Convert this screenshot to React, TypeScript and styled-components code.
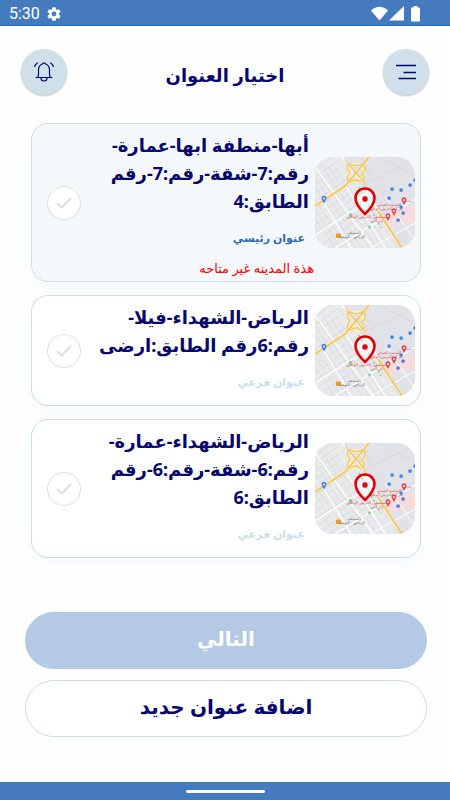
import React from "react";
import styled, { createGlobalStyle } from "styled-components";

const NAVY = "#07076e";
const BLUE = "#447bbf";
const LINE = "#cbdeea";

const GlobalStyle = createGlobalStyle`
  *, *::before, *::after { box-sizing: border-box; }
  body { margin: 0; background: #fefefe; }
  button, input { font: inherit; margin: 0; padding: 0; }
`;

const Screen = styled.div`
  min-height: 100vh;
  display: flex;
  flex-direction: column;
  font-family: "Noto Sans", "DejaVu Sans", sans-serif;
  color: ${NAVY};
`;

const StatusBar = styled.div`
  direction: ltr;
  height: 26px;
  flex: none;
  display: flex;
  align-items: center;
  justify-content: space-between;
  padding: 2px 29px 0 9px;
  background: ${BLUE};
  border-bottom: 1px solid #1a6fb8;
  color: #fff;
  font-family: Roboto, sans-serif;
  font-size: 16px;
  line-height: 24px;
`;

const StatusGroup = styled.div`
  display: flex;
  align-items: center;
  gap: 6px;
`;

const Header = styled.header`
  display: flex;
  align-items: center;
  justify-content: space-between;
  padding: 23px 21px 0;
`;

const RoundButton = styled.button`
  width: 46px;
  height: 46px;
  display: grid;
  place-items: center;
  border: 0;
  border-radius: 50%;
  background: #d0e0ea;
  color: ${NAVY};
  box-shadow: 0 1px 2px rgba(0, 0, 0, 0.25);
`;

const Title = styled.h1`
  margin: 0;
  padding-top: 6px;
  font-size: 18px;
  line-height: 28px;
  font-weight: 700;
`;

const Cards = styled.main`
  display: flex;
  flex-direction: column;
  gap: 13px;
  padding: 28px 29px 0 31px;
`;

const Card = styled.article<{ $tinted?: boolean }>`
  display: flex;
  align-items: center;
  gap: 6px;
  padding: 0 5px 0 15px;
  border: 1px solid ${LINE};
  border-radius: 17px;
  background: ${(p) => (p.$tinted ? "#f5f8fb" : "#fff")};
  box-shadow: 0 3px 14px rgba(150, 200, 225, 0.1);
`;

const MapFrame = styled.div`
  flex: none;
  width: 100px;
  height: 91px;
  overflow: hidden;
  border-radius: 18px;
`;

const Details = styled.div<{ $warned?: boolean }>`
  flex: 1;
  padding: 7px 0 ${(p) => (p.$warned ? 3 : 13)}px;
`;

const Address = styled.h2`
  margin: 0;
  font-size: 18px;
  line-height: 28px;
  font-weight: 700;
  white-space: pre;
`;

const Kind = styled.p<{ $main?: boolean }>`
  margin: 13px 4px 0;
  font-size: 11px;
  line-height: 20px;
  font-weight: 700;
  color: ${(p) => (p.$main ? "#2c6bb3" : "#ccdde8")};
`;

const Warning = styled.p`
  margin: 10px -5px 0;
  font-size: 13px;
  line-height: 20px;
  color: #f00;
`;

const Choice = styled.label`
  flex: none;
  display: grid;
  place-items: center;
  color: #dfdfdf;

  & > * { grid-area: 1 / 1; }
`;

const Radio = styled.input`
  appearance: none;
  width: 34px;
  height: 34px;
  border: 1px solid #dfdfdf;
  border-radius: 50%;
  background: #fff;
  &:checked + svg { color: ${BLUE}; }
`;

const Tick = styled.svg`
  pointer-events: none;
`;

const Actions = styled.footer`
  display: flex;
  flex-direction: column;
  gap: 11px;
  margin-top: auto;
  padding: 24px 23px 45px 25px;
`;

const Action = styled.button<{ $filled?: boolean }>`
  height: 57px;
  padding-bottom: 4px;
  border: 1px solid ${(p) => (p.$filled ? "#b4c9e4" : LINE)};
  border-radius: 29px;
  background: ${(p) => (p.$filled ? "#b4c9e4" : "#fff")};
  color: ${(p) => (p.$filled ? "#fff" : NAVY)};
  font-size: 20px;
  line-height: 28px;
  font-weight: 700;
`;

const NavBar = styled.div`
  flex: none;
  height: 18px;
  display: grid;
  place-items: center;
  background: ${BLUE};
`;

const HomeHandle = styled.div`
  width: 79px;
  height: 3px;
  border-radius: 2px;
  background: #fff;
`;

const GearIcon = () => (
  <svg width="16" height="16" viewBox="0 0 24 24" fill="#fff" aria-hidden="true">
    <path d="M19.4 13a7.6 7.6 0 0 0 0-2l2.2-1.7c.2-.1.3-.4.1-.6l-2-3.5c-.1-.2-.4-.3-.6-.2l-2.5 1a7.3 7.3 0 0 0-1.7-1l-.4-2.6a.5.5 0 0 0-.5-.4h-4a.5.5 0 0 0-.5.4l-.4 2.6c-.6.3-1.2.6-1.7 1l-2.5-1c-.2-.1-.5 0-.6.2l-2 3.5c-.1.2-.1.5.1.6L4.6 11a7.6 7.6 0 0 0 0 2l-2.2 1.7c-.2.1-.3.4-.1.6l2 3.5c.1.2.4.3.6.2l2.5-1c.5.4 1.1.7 1.7 1l.4 2.6c0 .2.2.4.5.4h4c.2 0 .5-.2.5-.4l.4-2.6c.6-.3 1.2-.6 1.7-1l2.5 1c.2.1.5 0 .6-.2l2-3.5c.1-.2.1-.5-.1-.6zM12 15.6a3.6 3.6 0 1 1 0-7.2 3.6 3.6 0 0 1 0 7.2z" />
  </svg>
);

const SignalIcons = () => (
  <svg width="50" height="16" viewBox="0 0 50 16" fill="#fff" aria-hidden="true">
    <path d="M0 4.5Q8.5-3 17 4.5L8.5 14.5z" />
    <path d="M33 0v14.5H18z" />
    <path d="M42.5 1.5V0h4v1.5h1.5q1 0 1 1v12q0 1-1 1h-7q-1 0-1-1v-12q0-1 1-1z" />
  </svg>
);

const BellIcon = () => (
  <svg width="22" height="22" viewBox="0 0 22 22" fill="none" stroke="currentColor" strokeWidth="1.2" strokeLinecap="round" aria-hidden="true">
    <path d="M3 16.5h16M4.5 16.5q1-1.5 1-3.5V9q0-4.5 3.9-6a1.7 1.7 0 0 1 3.2 0q3.9 1.5 3.9 6v4q0 2 1 3.5M8 17a3 3 0 0 0 6 0M1.500 5.500q.8-2.200 2.800-3.500M20.500 5.500q-.8-2.200-2.800-3.500" />
  </svg>
);

const MenuIcon = () => (
  <svg width="22" height="16" viewBox="0 0 22 16" fill="none" stroke="currentColor" strokeWidth="1.3" aria-hidden="true">
    <path d="M1 1.5h20M8.5 8.5h12.5M3.5 14.5h17.5" />
  </svg>
);

const streets = Array.from({ length: 13 }, (_, i) => i);
const bluePlaces = [[77, 32], [86, 33], [95, 28], [100, 23], [74, 41], [86, 50], [88, 56], [83, 63]];
const redPlaces = [[89, 44], [79, 55], [73, 60]];

const CityMap = () => (
  <svg width="100" height="91" viewBox="0 0 100 91" role="img" aria-label="موقع العنوان على الخريطة">
    <rect width="100" height="91" fill="#e1e3e8" />
    <path d="M0 0H27L50 29 84 91H0z" fill="#e9eaec" />
    <g stroke="#d7d8db" strokeWidth=".7">
      {streets.map((i) => (
        <path key={i} d={`M${-36 + i * 7} ${8 + (i % 3)}l56 83`} />
      ))}
      {streets.map((i) => (
        <path key={`c${i}`} d={`M0 ${12 + i * 8}l${i < 4 ? 24 : 56} ${i < 4 ? -17 : -38}`} />
      ))}
    </g>
    <path d="M64 0 100 19M56 24 100 2" stroke="#d6d9df" strokeWidth="1" />
    <path d="M80 52 100 49V65L74 69 69 62z" fill="#f8dcdd" />
    <g fill="none" stroke="#fff">
      <path d="M27 0 50 28 66 58M0 10 58 91M8 44 36 91M20 91 100 42M31 29 70 91M0 78 34 56 60 43" strokeWidth="1.3" />
      <path d="M56 91 100 66M70 40 100 84" strokeWidth="1" />
    </g>
    <g fill="none" stroke="#fff0bd" strokeWidth="3">
      <path d="M0 49 30 29 41 16 54 0M63 54 87 91" />
      <ellipse cx="41" cy="16" rx="8" ry="9" />
    </g>
    <g fill="none" stroke="#f3c562">
      <path d="M0 49 30 29 41 16 54 0M63 54 87 91" strokeWidth="1.8" />
      <path d="M34 7Q41 10 48 7 52 9 49 15 46 17 49 20 50 25 45 25 41 21 36 25 31 25 33 19 36 16 33 13 31 8 34 7zM34 8 48 24M30 3 34 8M48 24 51 31" strokeWidth="1.2" />
    </g>
    <path d="M44 30 66 71" stroke="#7ccb92" strokeWidth="1.2" strokeDasharray="3 2" />
    <g fill="#3f83e6">
      {bluePlaces.map(([x, y]) => (
        <rect key={`${x}-${y}`} x={x - 1.5} y={y - 1.5} width="3.2" height="3.2" rx=".8" />
      ))}
      <path d="M9 46.5 6.8 42.5a2.5 2.5 0 1 1 4.4 0z" />
    </g>
    <circle cx="9" cy="41.5" r=".9" fill="#fff" />
    <g fill="#8dcca2">
      <circle cx="35.5" cy="58" r="2" />
      <circle cx="54.5" cy="70" r="1.4" />
    </g>
    <g fill="#df4a4e">
      {redPlaces.map(([x, y]) => (
        <path key={x} d={`M${x} ${y + 4}l-2.2-4a2.5 2.5 0 1 1 4.4 0z`} />
      ))}
    </g>
    <g fill="#fff">
      {redPlaces.map(([x, y]) => (
        <circle key={x} cx={x} cy={y - 1} r=".9" />
      ))}
    </g>
    <rect x="21" y="76.5" width="5" height="4.5" rx="1" fill="#f29a1f" />
    <g fontSize="4" fill="#d9545a" textAnchor="middle" direction="rtl">
      <text x="74" y="49">المجمع الصحي</text>
      <text x="70" y="53">مركز الحرس الوطني</text>
      <text x="52" y="61">مستشفى الحرس الوطني</text>
      <text x="62" y="65">بالرياض</text>
    </g>
    <g fontSize="3" fill="#d9545a" textAnchor="middle" direction="rtl">
      <text x="94" y="45">عيادة</text>
    </g>
    <g fontSize="4" fill="#777" textAnchor="middle" direction="rtl">
      <text x="39" y="77">المسيف</text>
      <text x="37" y="81">الرياض - النهضة</text>
    </g>
    <path d="M50 57Q40.5 48 40.5 41a9.5 9.5 0 0 1 19 0Q59.5 48 50 57z" fill="#fff" fillOpacity=".5" stroke="#e00008" strokeWidth="2.6" />
    <circle cx="50" cy="42" r="2.7" fill="#e00008" />
  </svg>
);

interface AddressEntry {
  id: string;
  text: string;
  kind: string;
  main?: boolean;
  warning?: string;
}

const addresses: AddressEntry[] = [
  {
    id: "abha",
    text: "أبها-منطفة ابها-عمارة-\nرقم:7-شقة-رقم:7-رقم\nالطابق:4",
    kind: "عنوان رئيسي",
    main: true,
    warning: "هذة المدينه غير متاحه",
  },
  { id: "villa", text: "الرياض-الشهداء-فيلا-\nرقم:6رقم الطابق:ارضى", kind: "عنوان فرعي" },
  { id: "building", text: "الرياض-الشهداء-عمارة-\nرقم:6-شقة-رقم:6-رقم\nالطابق:6", kind: "عنوان فرعي" },
];

const AddressCard = ({ entry }: { entry: AddressEntry }) => (
  <Card $tinted={!!entry.warning}>
    <MapFrame><CityMap /></MapFrame>
    <Details $warned={!!entry.warning}>
      <Address id={`address-${entry.id}`}>{entry.text}</Address>
      <Kind $main={entry.main}>{entry.kind}</Kind>
      {entry.warning && <Warning>{entry.warning}</Warning>}
    </Details>
    <Choice>
      <Radio type="radio" name="address" value={entry.id} aria-labelledby={`address-${entry.id}`} />
      <Tick width="16" height="12" viewBox="0 0 16 12" fill="none" stroke="currentColor" strokeWidth="2" aria-hidden="true">
        <path d="M1 6 5.5 10.5 15 1" />
      </Tick>
    </Choice>
  </Card>
);

export default function App() {
  return (
    <Screen dir="rtl" lang="ar">
      <GlobalStyle />
      <StatusBar>
        <StatusGroup><span>5:30</span><GearIcon /></StatusGroup>
        <SignalIcons />
      </StatusBar>
      <Header>
        <RoundButton type="button" aria-label="القائمة"><MenuIcon /></RoundButton>
        <Title>اختيار العنوان</Title>
        <RoundButton type="button" aria-label="الإشعارات"><BellIcon /></RoundButton>
      </Header>
      <Cards>
        {addresses.map((entry) => <AddressCard key={entry.id} entry={entry} />)}
      </Cards>
      <Actions>
        <Action type="button" $filled>التالي</Action>
        <Action type="button">اضافة عنوان جديد</Action>
      </Actions>
      <NavBar><HomeHandle /></NavBar>
    </Screen>
  );
}
